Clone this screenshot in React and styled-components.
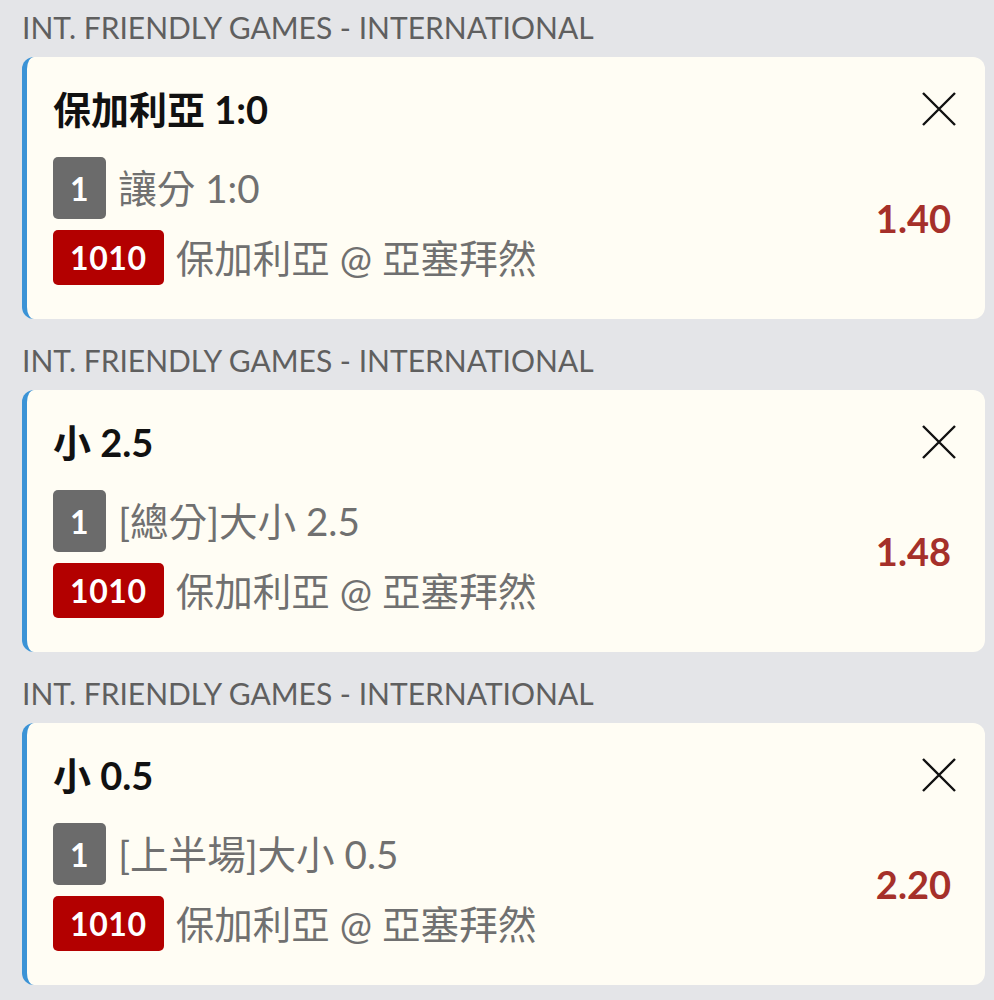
import React from "react";
import styled, { createGlobalStyle } from "styled-components";

const GlobalStyle = createGlobalStyle`
  html, body {
    margin: 0;
    padding: 0;
    background: #e4e5e8;
  }
  body {
    font-family: Lato, "Noto Sans CJK TC", "Noto Sans", sans-serif;
  }
`;

const Page = styled.div`
  display: flex;
  flex-direction: column;
  padding: 0 9px 0 22px;
  background: #e4e5e8;
  min-height: 1000px;
  box-sizing: border-box;
`;

const Group = styled.section`
  display: flex;
  flex-direction: column;
  margin-bottom: 14px;
`;

const LeagueHeader = styled.div`
  font-family: Lato, "Noto Sans CJK TC", sans-serif;
  font-size: 30px;
  line-height: 36px;
  color: #5f5f5f;
  padding-top: 9px;
  margin-bottom: 12px;
  white-space: nowrap;
`;

const Card = styled.div`
  display: flex;
  flex-direction: column;
  background: #fffdf4;
  border-left: 5px solid #3b93d6;
  border-radius: 12px;
  padding: 31px 29px 32px 26px;
  box-sizing: border-box;
  height: 262px;
`;

const TitleRow = styled.div`
  display: flex;
  align-items: center;
  justify-content: space-between;
`;

const Title = styled.div`
  font-family: Lato, "Noto Sans CJK TC", sans-serif;
  font-weight: 700;
  font-size: 38px;
  line-height: 42px;
  color: #111111;
`;

const CloseButton = styled.button`
  display: flex;
  align-items: center;
  justify-content: center;
  width: 34px;
  height: 34px;
  padding: 0;
  border: none;
  background: transparent;
  cursor: pointer;
`;

const Body = styled.div`
  display: flex;
  align-items: center;
  justify-content: space-between;
  margin-top: 27px;
`;

const Legs = styled.div`
  display: flex;
  flex-direction: column;
  gap: 11px;
`;

const LegRow = styled.div`
  display: flex;
  align-items: center;
  gap: 12px;
`;

const Badge = styled.span`
  display: inline-flex;
  align-items: center;
  justify-content: center;
  box-sizing: border-box;
  min-width: 53px;
  height: ${(p) => p.$h}px;
  padding: 0 17px;
  border-radius: 5px;
  background: ${(p) => (p.$variant === "red" ? "#b30000" : "#6b6b6b")};
  color: #ffffff;
  font-family: Lato, sans-serif;
  font-weight: 700;
  font-size: 32px;
  letter-spacing: 0.6px;
`;

const LegText = styled.span`
  font-family: Lato, "Noto Sans CJK TC", sans-serif;
  font-size: 38.6px;
  line-height: 44px;
  color: #707070;
  white-space: nowrap;
`;

const Odds = styled.div`
  font-family: Lato, sans-serif;
  font-weight: 700;
  font-size: 38px;
  color: #a5302a;
  margin: 0 5px 6px 0;
`;

const CloseIcon = () => (
  <svg width="34" height="34" viewBox="0 0 34 34" fill="none">
    <path d="M1 1 L33 33 M33 1 L1 33" stroke="#111" strokeWidth="2.4" />
  </svg>
);

const bets = [
  { title: "保加利亞 1:0", market: "讓分 1:0", odds: "1.40" },
  { title: "小 2.5", market: "[總分]大小 2.5", odds: "1.48" },
  { title: "小 0.5", market: "[上半場]大小 0.5", odds: "2.20" },
];

export default function App() {
  return (
    <>
      <GlobalStyle />
      <Page>
        {bets.map((b, i) => (
          <Group key={i}>
            <LeagueHeader>INT. FRIENDLY GAMES - INTERNATIONAL</LeagueHeader>
            <Card>
              <TitleRow>
                <Title>{b.title}</Title>
                <CloseButton aria-label="close">
                  <CloseIcon />
                </CloseButton>
              </TitleRow>
              <Body>
                <Legs>
                  <LegRow>
                    <Badge $h={62}>1</Badge>
                    <LegText>{b.market}</LegText>
                  </LegRow>
                  <LegRow>
                    <Badge $h={55} $variant="red">1010</Badge>
                    <LegText>保加利亞 @ 亞塞拜然</LegText>
                  </LegRow>
                </Legs>
                <Odds>{b.odds}</Odds>
              </Body>
            </Card>
          </Group>
        ))}
      </Page>
    </>
  );
}
